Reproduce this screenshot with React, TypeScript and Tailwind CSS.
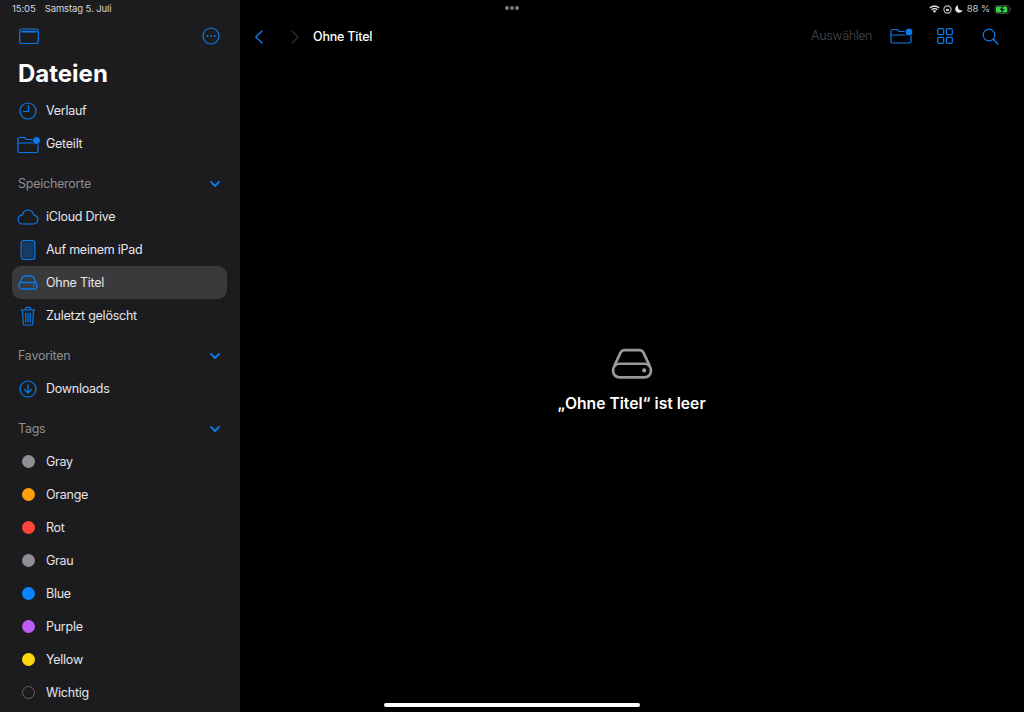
import React from "react";

const B = "#0a7aeb";
const font = { fontFamily: '"Inter", "Liberation Sans", sans-serif' };

function Ico({ w = 24, h = 24, children }: { w?: number; h?: number; children: React.ReactNode }) {
  return (
    <svg width={w} height={h} viewBox={`0 0 ${w} ${h}`} fill="none" stroke={B} strokeWidth={1.2} strokeLinecap="round" strokeLinejoin="round" className="shrink-0">
      {children}
    </svg>
  );
}

const Clock = () => (
  <Ico w={20} h={20}>
    <circle cx="10" cy="10" r="8" />
    <path d="M10.5 4.500V10.500H5.500" />
  </Ico>
);
const Folder = () => (
  <Ico w={24} h={20}>
    <path d="M2 17V5A1.500 1.500 0 0 1 3.500 3.500H8.500L10.500 5.500H20.500A1.500 1.500 0 0 1 22 7V17A1.500 1.500 0 0 1 20.500 18.500H3.500A1.500 1.500 0 0 1 2 17Z" />
    <path d="M2 9H22" />
    <circle cx="20.500" cy="6.500" r="4" fill={B} stroke="#1c1c1e" strokeWidth="1" />
  </Ico>
);
const Cloud = () => (
  <Ico w={22} h={16}>
    <path d="M5.500 15H16.500C19 15 20.800 13 20.800 10.600C20.800 8.300 19.200 6.600 17 6.400C16.200 3 13.800 1 11 1C8.300 1 6.200 2.900 5.500 5.800C3 6.200 1.200 8.100 1.200 10.500C1.200 13 3 15 5.500 15Z" />
  </Ico>
);
const IPad = () => (
  <Ico w={16} h={20}>
    <rect x="1.200" y="0.700" width="13.600" height="18.600" rx="2" />
    <rect x="2.600" y="2.200" width="10.800" height="15.600" rx="0.500" fill={B} fillOpacity={0.35} stroke="none" />
  </Ico>
);
const Drive = ({ color = B, scale = 1 }: { color?: string; scale?: number }) => (
  <svg width={20 * scale} height={15 * scale} viewBox="0 0 20 15" fill="none" stroke={color} strokeWidth={1.300} strokeLinejoin="round" className="shrink-0">
    <path d="M1.600 8.500L4.600 2.100C5 1.400 5.500 1 6.200 1H13.800C14.500 1 15 1.400 15.400 2.100L18.400 8.500" />
    <rect x="1" y="7.500" width="18" height="6.500" rx="3" />
    <circle cx="15.800" cy="10.700" r="1" fill={color} stroke="none" />
  </svg>
);
const Trash = () => (
  <Ico w={16} h={20}>
    <path d="M1 4H15M5.500 4V2.500A1.200 1.200 0 0 1 6.700 1.300H9.300A1.200 1.200 0 0 1 10.500 2.500V4" />
    <path d="M2.500 4L3.300 17.500A1.500 1.500 0 0 0 4.800 19H11.200A1.500 1.500 0 0 0 12.700 17.500L13.500 4" />
    <path d="M5.700 7V16M8 7V16M10.300 7V16" />
  </Ico>
);
const Download = () => (
  <Ico w={20} h={20}>
    <circle cx="10" cy="10" r="8" />
    <path d="M10 5.500V14M6.500 10.500L10 14L13.500 10.500" />
  </Ico>
);
const Chevron = () => (
  <svg width="12" height="8" viewBox="0 0 12 8" fill="none" stroke={B} strokeWidth="1.900" strokeLinecap="round" strokeLinejoin="round">
    <path d="M2 2L6 6L10 2" />
  </svg>
);

function Row({ icon, label, active }: { icon: React.ReactNode; label: string; active?: boolean }) {
  return (
    <div className={`ml-3 mr-[13px] flex h-[33px] items-center rounded-[9px] ${active ? "bg-[#3a3a3c]" : ""}`}>
      <div className="mr-[2px] flex w-8 items-center justify-center">{icon}</div>
      <span className="pt-[1px] text-[12.500px] tracking-[-0.25px] text-[#e5e5ea]">{label}</span>
    </div>
  );
}

function Header({ label, className }: { label: string; className: string }) {
  return (
    <div className={`flex h-8 items-center justify-between pl-[18px] pr-[19px] ${className}`}>
      <span className="text-[12.500px] tracking-[-0.25px] text-[#8e8e93]">{label}</span>
      <Chevron />
    </div>
  );
}

function Tag({ color, label }: { color: string; label: string }) {
  return (
    <Row
      label={label}
      icon={<span className="h-[13px] w-[13px] rounded-full" style={{ backgroundColor: color }} />}
    />
  );
}

export default function App() {
  return (
    <div className="relative flex h-[712px] w-[1024px] overflow-hidden bg-black text-white" style={font}>
      <aside className="flex w-[240px] shrink-0 flex-col bg-[#1c1c1e]">
        <div className="flex h-4 items-start gap-[9px] pl-3 pt-[3px] text-[9.500px] leading-[12px] tracking-[-0.1px] text-[#d8d8dc]">
          <span>15:05</span>
          <span>Samstag 5. Juli</span>
        </div>
        <div className="flex h-10 items-center justify-between pl-[19px] pr-5">
          <Ico w={20} h={16}>
            <rect x="0.700" y="1" width="18.600" height="14.500" rx="2" />
            <path d="M3 3.700H17" strokeWidth="1.800" />
          </Ico>
          <Ico w={18} h={18}>
            <circle cx="9" cy="9" r="8" />
            <circle cx="5.300" cy="9" r="1" fill={B} stroke="none" />
            <circle cx="9" cy="9" r="1" fill={B} stroke="none" />
            <circle cx="12.700" cy="9" r="1" fill={B} stroke="none" />
          </Ico>
        </div>
        <h1 className="flex h-[34px] items-center pl-[18px] pt-[1px] text-[24px] font-bold">Dateien</h1>
        <div className="mt-1">
          <Row icon={<Clock />} label="Verlauf" />
          <Row icon={<Folder />} label="Geteilt" />
        </div>
        <Header label="Speicherorte" className="mt-2" />
        <Row icon={<Cloud />} label="iCloud Drive" />
        <Row icon={<IPad />} label="Auf meinem iPad" />
        <Row icon={<Drive />} label="Ohne Titel" active />
        <Row icon={<Trash />} label="Zuletzt gelöscht" />
        <Header label="Favoriten" className="mt-2" />
        <Row icon={<Download />} label="Downloads" />
        <Header label="Tags" className="mt-2" />
        <Tag color="#8e8e93" label="Gray" />
        <Tag color="#ff9f0a" label="Orange" />
        <Tag color="#ff453a" label="Rot" />
        <Tag color="#8e8e93" label="Grau" />
        <Tag color="#0a84ff" label="Blue" />
        <Tag color="#bf5af2" label="Purple" />
        <Tag color="#ffd60a" label="Yellow" />
        <Row
          label="Wichtig"
          icon={<span className="h-[13px] w-[13px] rounded-full border border-[#636366]" />}
        />
      </aside>

      <main className="flex min-w-0 flex-1 flex-col">
        <div className="flex h-4 items-start justify-end pr-3 pt-[3px] text-[9.500px] leading-[12px] text-[#c8c8cc]">
          <div className="flex items-center">
            <svg width="11" height="8" viewBox="0 0 12 9" fill="#e5e5ea">
              <path d="M6 9L3.900 6.600C5.100 5.600 6.900 5.600 8.100 6.600Z" />
              <path d="M3.200 5.800L2.200 4.700C4.400 2.900 7.600 2.900 9.800 4.700L8.800 5.800C7.100 4.500 4.900 4.500 3.200 5.800Z" />
              <path d="M1.500 3.900L0.400 2.800C3.600 0 8.400 0 11.600 2.800L10.500 3.900C7.900 1.700 4.100 1.700 1.500 3.900Z" />
            </svg>
            <svg width="9" height="9" viewBox="0 0 10 10" fill="none" stroke="#c8c8cc" strokeWidth="1.200" className="ml-[3px]">
              <circle cx="5" cy="5" r="4" />
              <rect x="3.400" y="4.300" width="3.200" height="2.400" fill="#c8c8cc" stroke="none" />
            </svg>
            <svg width="8" height="8" viewBox="0 0 9 9" fill="#e5e5ea" className="ml-[3px]">
              <path d="M3.500 0.300C1.400 0.900 0.200 2.500 0.200 4.500C0.200 7 2.200 8.800 4.500 8.800C6.300 8.800 7.900 7.700 8.600 6C5.300 6.800 2.500 4 3.500 0.300Z" />
            </svg>
            <span className="ml-[4px] tracking-[-0.1px]">88 %</span>
            <svg width="18" height="9" viewBox="0 0 19 10" className="ml-[4px]">
              <rect x="0.500" y="0.500" width="16" height="9" rx="2.500" fill="none" stroke="#48484a" />
              <rect x="1.700" y="1.700" width="12.600" height="6.600" rx="1.300" fill="#32d74b" />
              <path d="M17.500 3.300V6.700C18.300 6.400 18.700 5.700 18.700 5C18.700 4.300 18.300 3.600 17.500 3.300Z" fill="#48484a" />
              <path d="M9.500 0.900L5.800 5.600H8L7.300 9.100L11.200 4.400H9Z" fill="#000" />
            </svg>
          </div>
        </div>
        <div className="flex h-10 items-center justify-between pr-[25px]">
          <div className="flex items-center">
            <svg width="10" height="16" viewBox="0 0 10 16" fill="none" stroke={B} strokeWidth="1.500" strokeLinecap="round" strokeLinejoin="round" className="ml-[14px] mt-[1px]">
              <path d="M8 2L1.800 8L8 14" />
            </svg>
            <svg width="10" height="16" viewBox="0 0 10 16" fill="none" stroke="#2c2c2e" strokeWidth="1.500" strokeLinecap="round" strokeLinejoin="round" className="ml-[26px] mt-[1px]">
              <path d="M2 2L8.200 8L2 14" />
            </svg>
            <span className="ml-[13px] pt-[2px] text-[12.500px] font-medium tracking-[-0.2px] text-white">Ohne Titel</span>
          </div>
          <div className="flex items-center">
            <span className="pt-[1px] text-[12.500px] tracking-[-0.45px] text-[#3a3a3c]">Auswählen</span>
            <span className="ml-[18px]">
              <Ico w={23} h={18}>
                <path d="M1 14.500V4A1.500 1.500 0 0 1 2.500 2.500H7.500L9.500 4.500H19.500A1.500 1.500 0 0 1 21 6V14.500A1.500 1.500 0 0 1 19.500 16H2.500A1.500 1.500 0 0 1 1 14.500Z" />
                <path d="M1 8H21" />
                <circle cx="19" cy="5" r="4" fill={B} stroke="#000" strokeWidth="1" />
              </Ico>
            </span>
            <span className="ml-[24px]">
              <Ico w={16} h={16}>
                <rect x="0.700" y="0.700" width="6" height="6" rx="1.300" />
                <rect x="9.300" y="0.700" width="6" height="6" rx="1.300" />
                <rect x="0.700" y="9.300" width="6" height="6" rx="1.300" />
                <rect x="9.300" y="9.300" width="6" height="6" rx="1.300" />
              </Ico>
            </span>
            <span className="ml-[29px]">
              <Ico w={17} h={17}>
                <circle cx="7" cy="7" r="5.800" />
                <path d="M11.200 11.200L16 16" strokeWidth="1.500" />
              </Ico>
            </span>
          </div>
        </div>
        <div className="flex flex-1 flex-col items-center pr-[1px] pt-[292px]">
          <Drive color="#98989d" scale={2.100} />
          <p className="mt-[14px] text-[15.700px] font-semibold leading-[20px] text-white">„Ohne Titel“ ist leer</p>
        </div>
      </main>

      <div className="absolute left-1/2 top-[6px] flex -translate-x-1/2 gap-[1px]">
        <span className="h-[4px] w-[4px] rounded-full bg-[#7c7c80]" />
        <span className="h-[4px] w-[4px] rounded-full bg-[#7c7c80]" />
        <span className="h-[4px] w-[4px] rounded-full bg-[#7c7c80]" />
      </div>
      <div className="absolute bottom-[5px] left-[384px] h-[4px] w-[256px] rounded-full bg-white" />
    </div>
  );
}
